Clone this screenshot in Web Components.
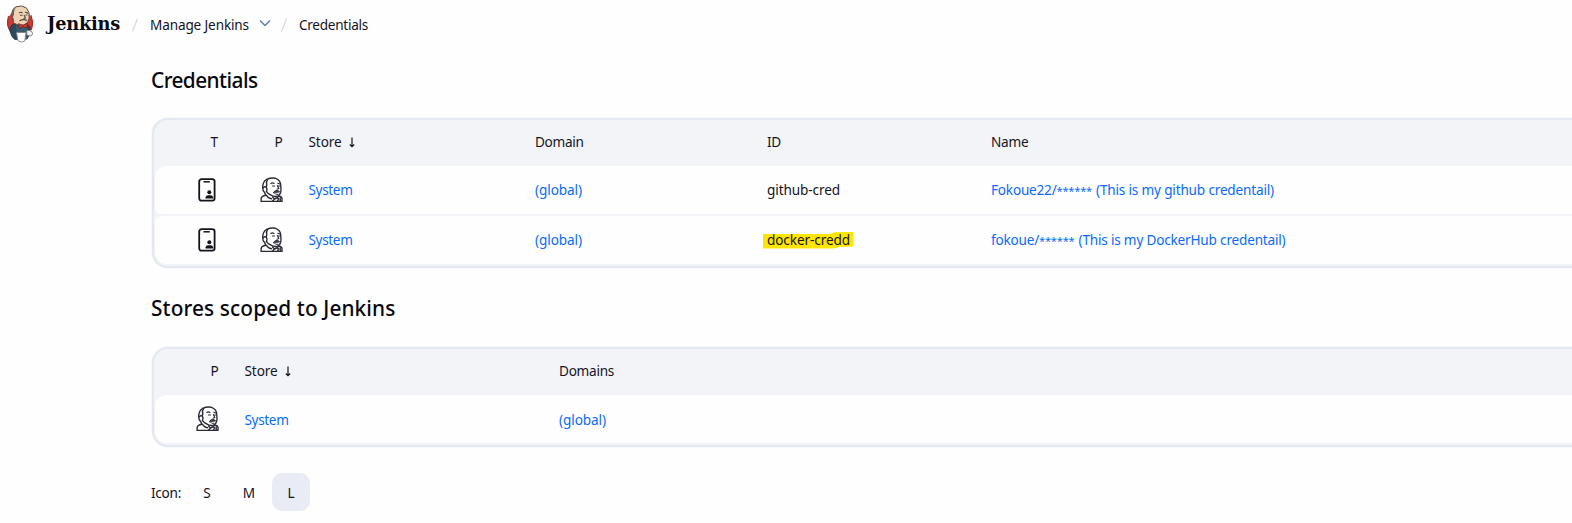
<!DOCTYPE html>
<html lang="en">
<head>
<meta charset="utf-8">
<title>Credentials</title>
<style>
html,body{margin:0;height:523px;overflow:hidden;background:#fefefe;color:#14141f;font:13.6px/20px "Noto Sans","Open Sans",sans-serif}
</style>
</head>
<body>
<credentials-page></credentials-page>
<script>
const define = (name, html, after) => customElements.define(name, class extends HTMLElement {
  constructor() {
    super();
    this.attachShadow({ mode: 'open' }).innerHTML = html;
  }
  connectedCallback() { if (after) after.call(this); }
});

// Text set to an exact line width through its tracking.
define('fit-text', `<style>:host{display:inline-block;white-space:nowrap}span{display:inline-block}</style><span><slot></slot></span>`, function () {
  const span = this.shadowRoot.querySelector('span');
  const target = +this.getAttribute('w');
  const n = this.textContent.length;
  const natural = span.getBoundingClientRect().width;
  this.style.width = target + 'px';
  span.style.letterSpacing = ((target - natural) / n) + 'px';
});

define('butler-logo', `<style>:host{display:block;width:28px;height:38px}svg{display:block}</style>
<svg width="28" height="38" viewBox="0 0 28 38">
<ellipse cx="14" cy="18" rx="13" ry="12.5" fill="#d33833"/>
<path d="M2.5 11Q0 20 4.500 27M25 10Q28 18 25.500 25" fill="none" stroke="#9c2a26" stroke-width="1"/>
<path d="M7 19Q4 21 4 25Q5 32 9 34.500L21 34Q25 29 24 22L20 18Z" fill="#2c4a5c" stroke="#1d2b35" stroke-width=".8"/>
<path d="M7.500 18L6 12Q5 4 10 1.800Q16-.5 20.500 3Q24 7 23.200 13Q22.500 18.500 18 20Q12 21 7.500 18Z" fill="#efd3b4" stroke="#4b4038" stroke-width=".9"/>
<path d="M10 2.500Q7.500 5 8 9.500L7 12Q8 14 8.500 17Q4.800 14.500 5.500 8.500Q6.500 4 10 2.500Z" fill="#6d6058"/>
<path d="M13 8Q15 6.500 16.500 8M19 7.500Q21 7 22 8.500M14 10.300H16.500M19.500 10H21.500M18 10L19.500 13L17.500 13.800M13.500 16Q17 13.500 21 15.500" fill="none" stroke="#594b42" stroke-width="1.1"/>
<path d="M10 19.500L14 24L17 21L22 24L21 34H11Z" fill="#395c70"/>
<path d="M12.500 18.500L17 20.500L21.500 18L21 23L17 21.800L13 23.500Z" fill="#d33833" stroke="#671b1b" stroke-width=".6"/>
<path d="M10.500 27.500H20L18.800 36Q15.500 38 12 36Z" fill="#fff" stroke="#7d858b" stroke-width=".9"/>
<path d="M20.500 26Q22.500 24.500 26 26.500Q27.500 29.500 25 31L21 30.500Z" fill="#f8f4ef" stroke="#6a6f73" stroke-width=".8"/>
</svg>`);

define('phone-icon', `<style>:host{display:block;width:18px;height:24px}svg{display:block}</style>
<svg width="18" height="24" viewBox="0 0 18 24">
<rect x="1.200" y="1.200" width="15.400" height="21.500" rx="2.400" fill="none" stroke="#14141f" stroke-width="1.800"/>
<path d="M5.500 3.800H11.800" stroke="#14141f" stroke-width="1.500"/>
<circle cx="11.300" cy="14.200" r="2" fill="#14141f"/>
<path d="M7.500 20.500V19.400Q8 17.300 10 17.300H12.600Q14.800 17.300 15.200 19.400V20.500Z" fill="#14141f"/>
</svg>`);

define('butler-icon', `<style>:host{display:block;width:24px;height:26px;margin-left:-2px}svg{display:block}</style>
<svg width="24" height="26" viewBox="0 0 24 26" fill="none" stroke="#2b2b36" stroke-width="1.400" stroke-linejoin="round" stroke-linecap="round">
<path d="M4.600 15.500Q2.600 14.300 2.700 10.500Q2.800 4.500 6.500 2.500Q11 .5 15.500 1.300Q20.500 3 20.700 8.200L21 12.500Q21 17.500 17.500 19.200Q14 20.200 10.800 18Q7.500 16.500 6.500 14.500"/>
<path d="M7.500 2.800Q5.700 5 6.800 8L6.200 10Q4 9.300 3 11M6.200 10Q7.700 12 6.500 14.500"/>
<path d="M10.800 6.500Q12.300 5.200 14 6.500M17.800 6.200L19.800 7M12.500 9H14.500M18.300 9H19.600M17.300 8.500L18.800 11.500L17 12.300" stroke-width="1.100"/>
<path d="M13.500 15.500Q14.500 13.300 17 13.500Q19 13.500 19.500 15Q16.500 14.800 15 16Z" fill="#4a4a54" stroke-width="1"/>
<path d="M16 17.300H17.800" stroke-width="1"/>
<path d="M4.600 15.500L5.800 18.300Q1.500 19 1.100 21.800V24.400H22V21Q21 18.900 18.500 19.300M6.500 18.300Q8 21.500 11.500 21.800M12.500 20L14.500 22L12.500 24M14.500 22L17.500 20.500L18.500 22L17.500 24M20.200 21V24"/>
</svg>`);

define('crumb-bar', `<style>
:host{display:flex;align-items:center;height:49px;padding-left:6px}
butler-logo{margin-right:13px;margin-top:-1px}
.brand{font:bold 17.800px/24px "DejaVu Serif",serif;color:#0b0b16;margin-right:12px;position:relative;top:-1px}
.slash{display:block;margin-top:1px}
.crumb{margin:0 0 0 12px}
.chev{margin:-3px 10px 0 10px}
</style>
<butler-logo></butler-logo>
<fit-text class="brand" w="73">Jenkins</fit-text>
<svg class="slash" width="6" height="14"><path d="M.5 13.500L5.500 .5" stroke="#d5dbea" stroke-width="1.300"/></svg>
<fit-text class="crumb" w="99">Manage Jenkins</fit-text>
<svg class="chev" width="12" height="8"><path d="M1 1.500L6 6.500L11 1.500" fill="none" stroke="#5b80b2" stroke-width="1.500"/></svg>
<svg class="slash" width="6" height="14"><path d="M.5 13.500L5.500 .5" stroke="#d5dbea" stroke-width="1.300"/></svg>
<fit-text class="crumb" w="69">Credentials</fit-text>`);

define('section-title', `<style>:host{display:block;height:30px;font-size:20.800px;line-height:30px;font-weight:500;color:#07070f}</style><slot></slot>`);

// Rounded frame for a header row and its data rows.
define('data-table', `<style>
:host{display:flex;flex-direction:column;gap:2px;box-sizing:border-box;width:1460px;border:2px solid #e4e8f1;border-radius:16px;background:#f3f4f8;padding:0 1px 2px;box-shadow:0 0 0 .5px #eef1f6}
</style><slot></slot>`);

define('table-row', `<style>
:host{display:grid;grid-template-columns:var(--cols);align-items:center;height:48px;background:#fefefe;border-radius:6px;color:#14141f}
:host([first]){border-radius:12px 12px 6px 6px}
:host([last]){border-radius:6px 6px 12px 12px}
:host([first][last]){border-radius:12px}
:host([head]){height:44px;padding-bottom:2px;margin-bottom:-2px;background:none}
</style><slot></slot>`);

define('credentials-page', `<style>
:host{display:block;width:1572px;height:523px;overflow:hidden}
main{display:flex;flex-direction:column;padding:16px 0 0 151px;width:1460px}
.t1{--cols:43px 64px 46.500px 226.500px 232px 224px 1fr;margin:23px 0 25px 1px}
.t2{--cols:43px 46.500px 314.500px 1fr;margin:24px 0 0 1px}
.p{padding-left:12.500px}
.link{color:#0b6aff}
.hd{display:flex;align-items:center;gap:6px}
.gap{margin-left:4px}
.stars{font-size:11px;line-height:16px}
.mark{position:relative;z-index:0}
.mark svg{position:absolute;left:-4px;top:1px;z-index:-1}
.sizes{display:flex;align-items:center;height:38px;margin-top:26px}
.sizes fit-text{margin-right:7px;padding-top:1px}
.size{width:38px;height:38px;line-height:39px;text-align:center;border-radius:10px;margin-right:4px}
.size.on{background:#e9ecf5}
.t2 .link{padding-top:2px}
</style>
<crumb-bar></crumb-bar>
<main>
<section-title><fit-text w="106.500">Credentials</fit-text></section-title>
<data-table class="t1">
<table-row head><i></i><span class="p">T</span><span class="p">P</span><span class="hd"><fit-text w="33">Store</fit-text><svg width="8" height="12"><path d="M4 1.500V10.500M1.800 8.500L4 10.700L6.200 8.500" fill="none" stroke="#14141f" stroke-width="1.200"/></svg></span><span><fit-text w="48.500">Domain</fit-text></span><span><fit-text w="14">ID</fit-text></span><span><fit-text w="37.500">Name</fit-text></span></table-row>
<table-row first><i></i><phone-icon></phone-icon><butler-icon></butler-icon><span class="link"><fit-text w="44">System</fit-text></span><span class="link"><fit-text w="47">(global)</fit-text></span><span><fit-text w="73">github-cred</fit-text></span><span class="link"><fit-text w="65.500">Fokoue22/</fit-text><fit-text class="stars" w="35.500">******</fit-text><fit-text class="gap" w="178">(This is my github credentail)</fit-text></span></table-row>
<table-row last><i></i><phone-icon></phone-icon><butler-icon></butler-icon><span class="link"><fit-text w="44">System</fit-text></span><span class="link"><fit-text w="47">(global)</fit-text></span><span class="mark"><svg width="90" height="18"><path d="M0 3H66Q70 1 78 1H90V15.500L76 16Q72 17.500 68 17.500H0Z" fill="#ffe600"/></svg><fit-text w="83">docker-credd</fit-text></span><span class="link"><fit-text w="48">fokoue/</fit-text><fit-text class="stars" w="35.500">******</fit-text><fit-text class="gap" w="207">(This is my DockerHub credentail)</fit-text></span></table-row>
</data-table>
<section-title><fit-text w="244.500">Stores scoped to Jenkins</fit-text></section-title>
<data-table class="t2">
<table-row head><i></i><span class="p">P</span><span class="hd"><fit-text w="33">Store</fit-text><svg width="8" height="12"><path d="M4 1.500V10.500M1.800 8.500L4 10.700L6.200 8.500" fill="none" stroke="#14141f" stroke-width="1.200"/></svg></span><span><fit-text w="55">Domains</fit-text></span></table-row>
<table-row first last><i></i><butler-icon></butler-icon><span class="link"><fit-text w="44">System</fit-text></span><span class="link"><fit-text w="47">(global)</fit-text></span></table-row>
</data-table>
<div class="sizes"><fit-text w="30">Icon:</fit-text><span class="size">S</span><span class="size">M</span><span class="size on">L</span></div>
</main>`);
</script>
</body>
</html>
